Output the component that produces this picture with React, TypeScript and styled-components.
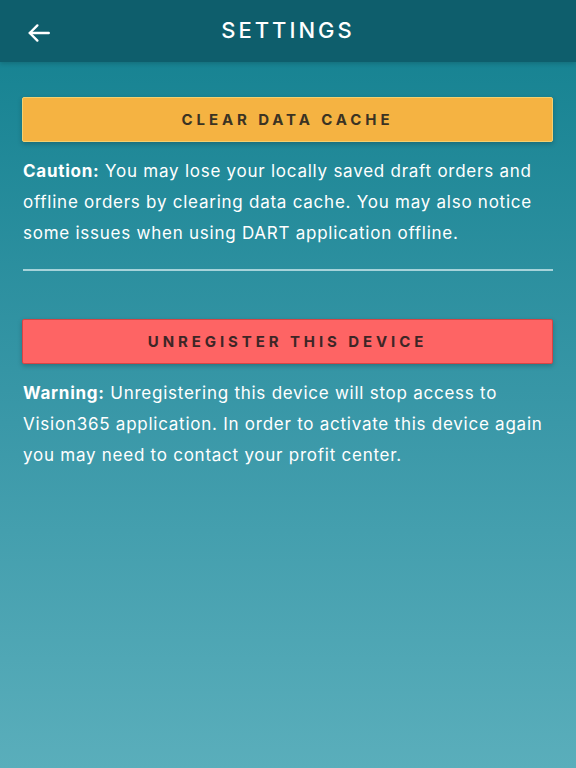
import styled, { createGlobalStyle } from 'styled-components'

const GlobalStyle = createGlobalStyle`
  html, body {
    margin: 0;
    padding: 0;
  }
  body {
    font-family: Inter, "Open Sans", "Liberation Sans", sans-serif;
  }
`

const Screen = styled.div`
  width: 576px;
  min-height: 768px;
  display: flex;
  flex-direction: column;
  background: linear-gradient(180deg, #12808f 0%, #3a98a8 55%, #5aaebb 100%);
`

const Header = styled.header`
  height: 62px;
  display: grid;
  grid-template-columns: 72px 1fr 72px;
  align-items: center;
  background: #0e5e6c;
  box-shadow: 0 2px 4px rgba(0, 0, 0, 0.15);
`

const BackButton = styled.button`
  display: flex;
  align-items: center;
  justify-content: center;
  width: 40px;
  height: 40px;
  margin-left: 19px;
  margin-top: 4px;
  padding: 0;
  border: none;
  background: transparent;
  color: #ffffff;
  cursor: pointer;
`

const Title = styled.h1`
  margin: 0;
  text-align: center;
  font-size: 22px;
  font-weight: 500;
  letter-spacing: 3px;
  color: #ffffff;
  padding-bottom: 3px;
`

const Content = styled.main`
  display: flex;
  flex-direction: column;
  padding: 35px 23px 0 22px;
`

const ActionButton = styled.button<{ $tone: 'warn' | 'danger' }>`
  width: 100%;
  height: 45px;
  border-radius: 2px;
  font-family: Inter, "Open Sans", "Liberation Sans", sans-serif;
  font-size: 15px;
  font-weight: 700;
  letter-spacing: 3.9px;
  cursor: pointer;
  box-shadow: 0 2px 5px rgba(0, 0, 0, 0.22);
  background: ${(p) => (p.$tone === 'warn' ? '#f5b342' : '#fe6464')};
  border: 1px solid ${(p) => (p.$tone === 'warn' ? '#f3d070' : '#d84444')};
  color: ${(p) => (p.$tone === 'warn' ? '#3b3323' : '#3d2626')};
`

const Note = styled.p`
  margin: 14px 0 0 1px;
  font-size: 17px;
  line-height: 31px;
  letter-spacing: 0.75px;
  color: #ffffff;

  strong {
    font-weight: 700;
  }
`

const Divider = styled.hr`
  margin: 20px 0 48px 1px;
  border: none;
  height: 2px;
  background: #a6d3da;
`

function BackArrow() {
  return (
    <svg width="26" height="26" viewBox="0 0 24 24" fill="none" stroke="currentColor" strokeWidth="2.2" strokeLinecap="round" strokeLinejoin="round">
      <path d="M21 12H3.5" />
      <path d="M10.5 5l-7 7 7 7" />
    </svg>
  )
}

export default function App() {
  return (
    <>
      <GlobalStyle />
      <Screen>
        <Header>
          <BackButton aria-label="Back">
            <BackArrow />
          </BackButton>
          <Title>SETTINGS</Title>
          <span />
        </Header>
        <Content>
          <ActionButton $tone="warn">CLEAR DATA CACHE</ActionButton>
          <Note>
            <strong>Caution:</strong> You may lose your locally saved draft orders and offline orders by clearing data
            cache. You may also notice some issues when using DART application offline.
          </Note>
          <Divider />
          <ActionButton $tone="danger">UNREGISTER THIS DEVICE</ActionButton>
          <Note>
            <strong>Warning:</strong> Unregistering this device will stop access to Vision365 application. In order to
            activate this device again you may need to contact your profit center.
          </Note>
        </Content>
      </Screen>
    </>
  )
}
